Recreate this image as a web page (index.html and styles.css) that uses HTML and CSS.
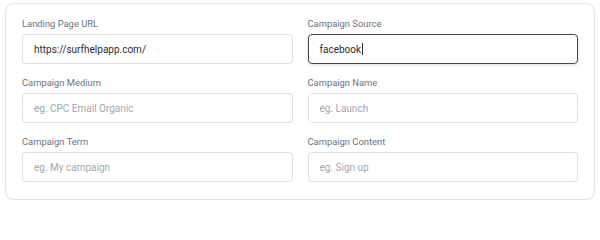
FILE: index.html
```html
<!DOCTYPE html>
<html lang="en">
<head>
<meta charset="utf-8">
<title>UTM Builder</title>
<link rel="stylesheet" href="styles.css">
</head>
<body>
<div class="page">
  <form class="card">
    <div class="field">
      <label class="label">Landing Page URL</label>
      <div class="input filled">https://surfhelpapp.com/</div>
    </div>
    <div class="field">
      <label class="label">Campaign Source</label>
      <div class="input filled focused">facebook<span class="caret"></span></div>
    </div>
    <div class="field">
      <label class="label">Campaign Medium</label>
      <div class="input placeholder">eg. CPC Email Organic</div>
    </div>
    <div class="field">
      <label class="label">Campaign Name</label>
      <div class="input placeholder">eg. Launch</div>
    </div>
    <div class="field">
      <label class="label">Campaign Term</label>
      <div class="input placeholder">eg. My campaign</div>
    </div>
    <div class="field">
      <label class="label">Campaign Content</label>
      <div class="input placeholder">eg. Sign up</div>
    </div>
  </form>
</div>
</body>
</html>
```
FILE: styles.css
```css
html, body {
  margin: 0;
  background: #ffffff;
}
body {
  font-family: "Roboto", "Liberation Sans", sans-serif;
}
.page {
  padding: 3px 5px 0 5px;
}
.card {
  box-sizing: border-box;
  width: 590px;
  margin: 0;
  border: 1px solid #e4e5ec;
  border-radius: 9px;
  background: #fff;
  box-shadow: 0 1px 3px rgba(30, 35, 60, 0.06);
  padding: 14px 16px 17px 16px;
  display: grid;
  grid-template-columns: 1fr 1fr;
  column-gap: 15px;
  row-gap: 13px;
}
.field {
  display: flex;
  flex-direction: column;
  gap: 4px;
}
.label {
  font-size: 9.4px;
  line-height: 12px;
  color: #6c717f;
}
.input {
  box-sizing: border-box;
  height: 30px;
  border: 1px solid #dedde8;
  border-radius: 4px;
  padding: 0 11px;
  display: flex;
  align-items: center;
  font-size: 10px;
}
.filled {
  color: #2a2d37;
}
.placeholder {
  color: #a3a6b0;
}
.focused {
  border-color: #434753;
  box-shadow: 0 1px 3px rgba(20, 25, 40, 0.18);
}
.caret {
  display: inline-block;
  width: 1px;
  height: 12px;
  margin-left: 1px;
  background: #2a2d37;
}
```
